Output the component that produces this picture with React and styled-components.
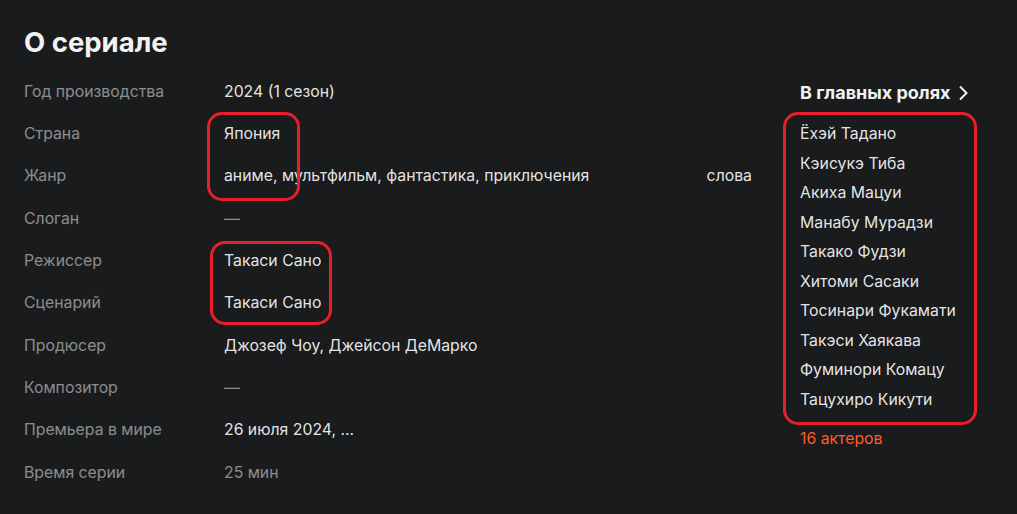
import styled, { createGlobalStyle } from "styled-components";

const GlobalStyle = createGlobalStyle`
  html, body {
    margin: 0;
    background: #1a1b1d;
  }
  body {
    font-family: Inter, "Liberation Sans", Arial, sans-serif;
    color: rgba(255, 255, 255, 0.9);
  }
`;

const Page = styled.div`
  position: relative;
  width: 1017px;
  height: 514px;
  box-sizing: border-box;
  padding: 26px 24px 0 24px;
  overflow: hidden;
`;

const Title = styled.h2`
  margin: 0 0 12px;
  font-size: 27.5px;
  line-height: 32px;
  font-weight: 700;
  color: #f2f2f2;
`;

const Columns = styled.div`
  display: flex;
  gap: 48px;
`;

const Table = styled.div`
  width: 728px;
  display: grid;
  grid-template-columns: 200px 1fr;
  grid-auto-rows: 42.33px;
  align-items: center;
`;

const Label = styled.div`
  font-size: 15.8px;
  color: rgba(255, 255, 255, 0.5);
`;

const Value = styled.div`
  display: flex;
  justify-content: space-between;
  font-size: 15.8px;
  color: ${(p) => (p.$muted ? "rgba(255, 255, 255, 0.5)" : "rgba(255, 255, 255, 0.9)")};
`;

const Cast = styled.div`
  display: flex;
  flex-direction: column;
  padding-top: 11px;
`;

const CastHeader = styled.a`
  display: flex;
  align-items: center;
  gap: 6px;
  font-size: 18px;
  font-weight: 700;
  line-height: 24px;
  color: #f2f2f2;
  margin-bottom: 14px;
`;

const Actor = styled.div`
  font-size: 15.8px;
  line-height: 29.5px;
  color: rgba(255, 255, 255, 0.9);
`;

const More = styled.a`
  margin-top: 15px;
  font-size: 15.8px;
  line-height: 20px;
  color: #ff5c26;
`;

const Mark = styled.div`
  position: absolute;
  box-sizing: border-box;
  border: 3.5px solid #ea1d2c;
  border-radius: 15px;
  pointer-events: none;
`;

const rows = [
  ["Год производства", ["2024 (1 сезон)"]],
  ["Страна", ["Япония"]],
  ["Жанр", ["аниме, мультфильм, фантастика, приключения", "слова"]],
  ["Слоган", ["—"], true],
  ["Режиссер", ["Такаси Сано"]],
  ["Сценарий", ["Такаси Сано"]],
  ["Продюсер", ["Джозеф Чоу, Джейсон ДеМарко"]],
  ["Композитор", ["—"], true],
  ["Премьера в мире", ["26 июля 2024, ..."]],
  ["Время серии", ["25 мин"], true],
];

const actors = [
  "Ёхэй Тадано",
  "Кэисукэ Тиба",
  "Акиха Мацуи",
  "Манабу Мурадзи",
  "Такако Фудзи",
  "Хитоми Сасаки",
  "Тосинари Фукамати",
  "Такэси Хаякава",
  "Фуминори Комацу",
  "Тацухиро Кикути",
];

const Chevron = () => (
  <svg width="12" height="16" viewBox="0 0 12 16" fill="none">
    <path d="M3 1.5 9.5 8 3 14.5" stroke="#f2f2f2" strokeWidth="2" />
  </svg>
);

export default function App() {
  return (
    <>
      <GlobalStyle />
      <Page>
        <Title>О сериале</Title>
        <Columns>
          <Table>
            {rows.map(([label, values, muted]) => (
              <>
                <Label key={label}>{label}</Label>
                <Value key={label + "v"} $muted={muted}>
                  {values.map((v) => (
                    <span key={v}>{v}</span>
                  ))}
                </Value>
              </>
            ))}
          </Table>
          <Cast>
            <CastHeader>
              В главных ролях <Chevron />
            </CastHeader>
            {actors.map((a) => (
              <Actor key={a}>{a}</Actor>
            ))}
            <More>16 актеров</More>
          </Cast>
        </Columns>
        <Mark style={{ left: 207, top: 112, width: 93, height: 89 }} />
        <Mark style={{ left: 210, top: 241, width: 122, height: 84 }} />
        <Mark style={{ left: 783, top: 112, width: 194, height: 313 }} />
      </Page>
    </>
  );
}
